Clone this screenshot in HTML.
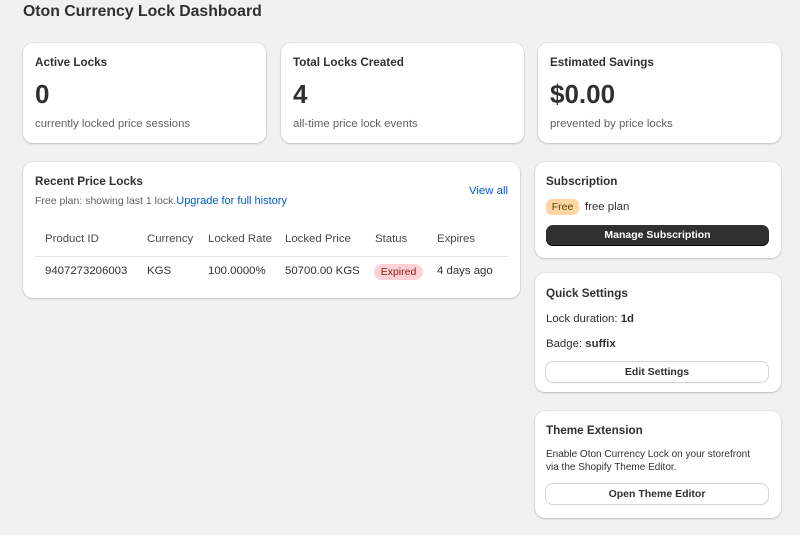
<!DOCTYPE html><html><head><style>
body{margin:0;width:800px;height:535px;background:#f1f1f1;font-family:"Liberation Sans",sans-serif;color:#303030;position:relative;overflow:hidden}
.a{position:absolute;white-space:nowrap}
.c{position:absolute;background:#fff;border-radius:10px;box-shadow:0 1px 2px rgba(0,0,0,.18),0 0 0 1px rgba(0,0,0,.04)}
.h{font-size:11.7px;font-weight:bold}
.big{font-size:26px;font-weight:bold}
.s{font-size:11.4px;color:#616161}
.t{font-size:11.4px;color:#303030}
.btn{position:absolute;border-radius:7px;font-size:10.5px;font-weight:bold;text-align:center}
</style></head><body>
<div class="a" style="left:23px;top:3px;font-size:15.8px;font-weight:bold">Oton Currency Lock Dashboard</div>

<div class="c" style="left:23px;top:43px;width:243px;height:100px"></div>
<div class="a h" style="left:35px;top:56px">Active Locks</div>
<div class="a big" style="left:35px;top:79px">0</div>
<div class="a s" style="left:35px;top:118px">currently locked price sessions</div>

<div class="c" style="left:281px;top:43px;width:243px;height:100px"></div>
<div class="a h" style="left:293px;top:56px">Total Locks Created</div>
<div class="a big" style="left:293px;top:79px">4</div>
<div class="a s" style="left:293px;top:118px">all-time price lock events</div>

<div class="c" style="left:538px;top:43px;width:243px;height:100px"></div>
<div class="a h" style="left:550px;top:56px">Estimated Savings</div>
<div class="a big" style="left:550px;top:79px">$0.00</div>
<div class="a s" style="left:550px;top:118px">prevented by price locks</div>

<div class="c" style="left:23px;top:162px;width:497px;height:136px"></div>
<div class="a h" style="left:35px;top:175px">Recent Price Locks</div>
<div class="a s" style="left:35px;top:195px;font-size:10.5px">Free plan: showing last 1 lock.<span style="color:#005bd3;font-size:11px">Upgrade for full history</span></div>
<div class="a" style="left:469px;top:185px;font-size:11.4px;color:#005bd3">View all</div>
<div class="a t" style="left:45px;top:233px;color:#4a4a4a">Product ID</div>
<div class="a t" style="left:147px;top:233px;color:#4a4a4a">Currency</div>
<div class="a t" style="left:208px;top:233px;color:#4a4a4a">Locked Rate</div>
<div class="a t" style="left:285px;top:233px;color:#4a4a4a">Locked Price</div>
<div class="a t" style="left:375px;top:233px;color:#4a4a4a">Status</div>
<div class="a t" style="left:437px;top:233px;color:#4a4a4a">Expires</div>
<div class="a" style="left:35px;top:256px;width:473px;border-top:1px solid #e3e3e3"></div>
<div class="a t" style="left:45px;top:265px">9407273206003</div>
<div class="a t" style="left:147px;top:265px">KGS</div>
<div class="a t" style="left:208px;top:265px">100.0000%</div>
<div class="a t" style="left:285px;top:265px">50700.00 KGS</div>
<div class="a" style="left:374px;top:264px;width:49px;height:16px;background:#fed1d7;border-radius:8px;font-size:10.5px;color:#8e1f0b;text-align:center;line-height:16px">Expired</div>
<div class="a t" style="left:437px;top:265px">4 days ago</div>

<div class="c" style="left:535px;top:162px;width:246px;height:96px"></div>
<div class="a h" style="left:546px;top:175px">Subscription</div>
<div class="a" style="left:546px;top:199px;width:33px;height:16px;background:#ffd6a4;border-radius:6px;font-size:10.5px;color:#5e4200;text-align:center;line-height:16px">Free</div>
<div class="a t" style="left:585px;top:201px">free plan</div>
<div class="btn" style="left:546px;top:225px;width:223px;height:21px;line-height:21px;background:#303030;color:#fff;box-shadow:inset 0 -1px 0 #000">Manage Subscription</div>

<div class="c" style="left:535px;top:273px;width:246px;height:119px"></div>
<div class="a h" style="left:546px;top:287px">Quick Settings</div>
<div class="a t" style="left:546px;top:313px">Lock duration: <b>1d</b></div>
<div class="a t" style="left:546px;top:338px">Badge: <b>suffix</b></div>
<div class="btn" style="left:546px;top:362px;width:222px;height:20px;line-height:20px;background:#fff;color:#303030;box-shadow:0 0 0 1px #d4d4d4,0 1px 1px rgba(0,0,0,.15)">Edit Settings</div>

<div class="c" style="left:535px;top:411px;width:246px;height:107px"></div>
<div class="a h" style="left:546px;top:424px">Theme Extension</div>
<div class="a" style="left:546px;top:448px;font-size:10px;line-height:13px;color:#303030">Enable Oton Currency Lock on your storefront<br>via the Shopify Theme Editor.</div>
<div class="btn" style="left:546px;top:484px;width:222px;height:20px;line-height:20px;background:#fff;color:#303030;box-shadow:0 0 0 1px #d4d4d4,0 1px 1px rgba(0,0,0,.15)">Open Theme Editor</div>
</body></html>
